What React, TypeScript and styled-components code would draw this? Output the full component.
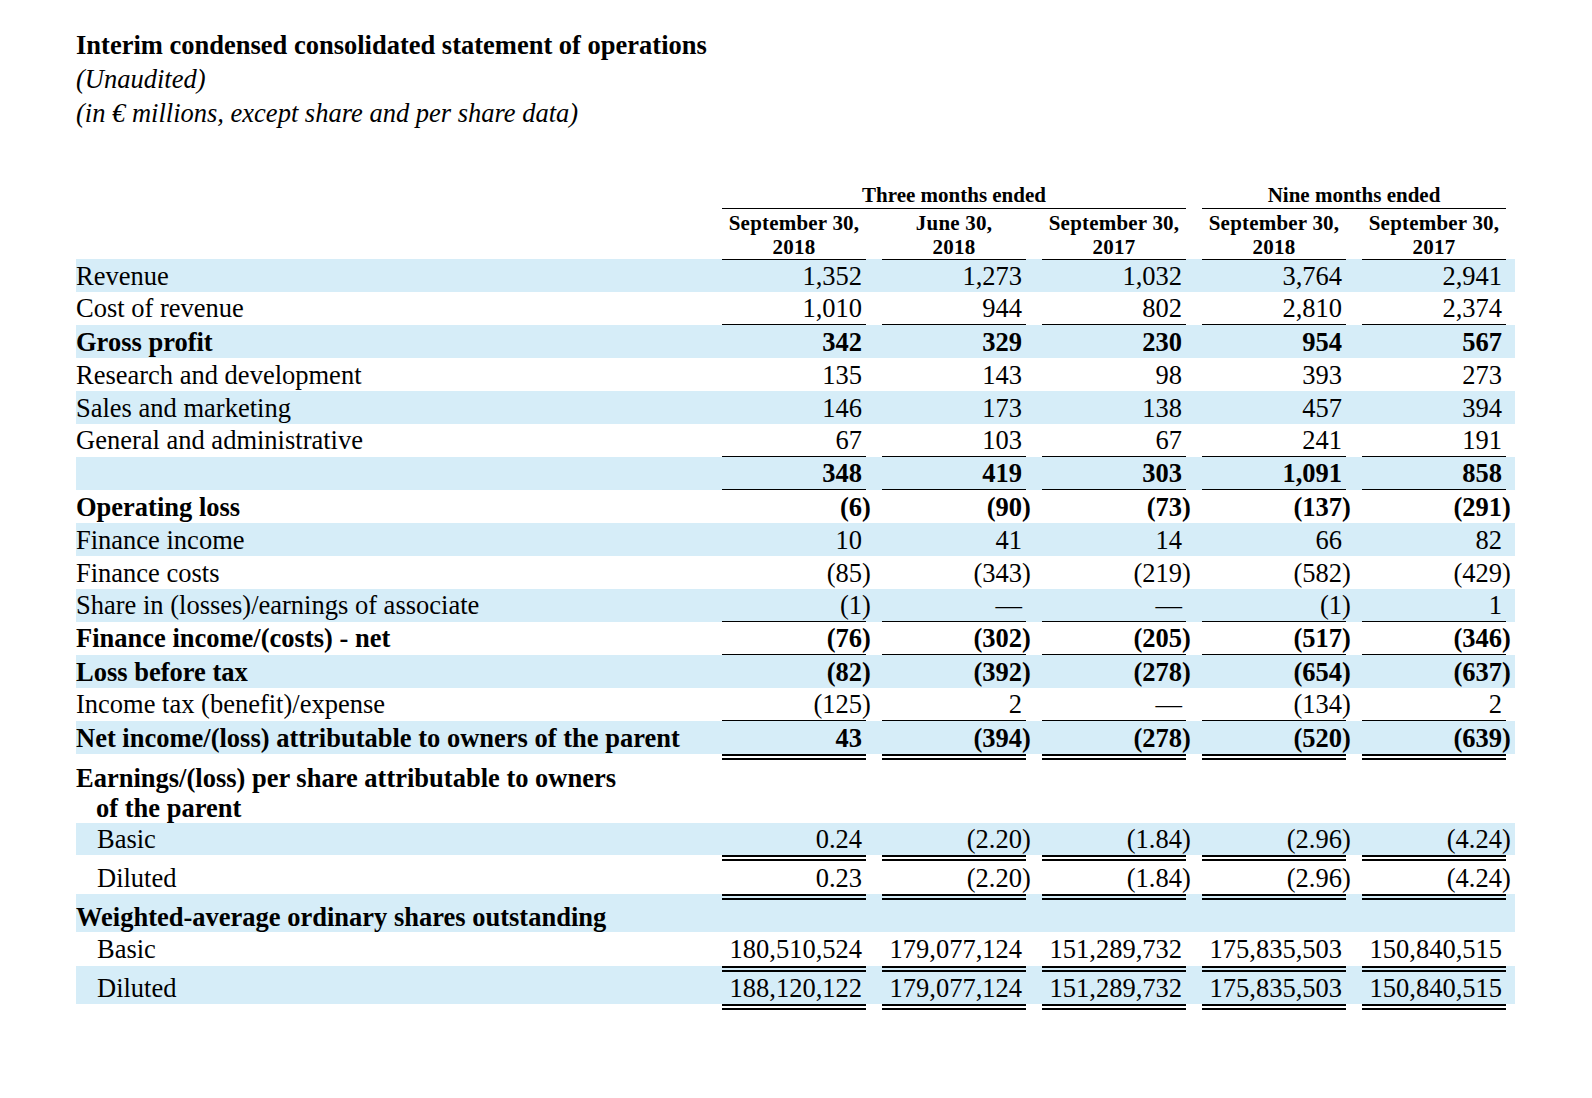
import React from 'react';
import styled, { createGlobalStyle, css } from 'styled-components';

type Rule = 'single' | 'double';

type Line = {
  label: string;
  values: string[];
  bold?: boolean;
  indent?: boolean;
  band?: boolean;
  heading?: boolean;
  height?: number;
  under?: Rule;
  over?: Rule;
};

const BAND = '#d6edf8';
const DOUBLE = 6;

const operations: Line[] = [
  { label: 'Revenue', band: true, values: ['1,352', '1,273', '1,032', '3,764', '2,941'] },
  { label: 'Cost of revenue', under: 'single', values: ['1,010', '944', '802', '2,810', '2,374'] },
  { label: 'Gross profit', band: true, bold: true, values: ['342', '329', '230', '954', '567'] },
  { label: 'Research and development', values: ['135', '143', '98', '393', '273'] },
  { label: 'Sales and marketing', band: true, values: ['146', '173', '138', '457', '394'] },
  { label: 'General and administrative', under: 'single', values: ['67', '103', '67', '241', '191'] },
  { label: '', band: true, bold: true, under: 'single', values: ['348', '419', '303', '1,091', '858'] },
  { label: 'Operating loss', bold: true, values: ['(6)', '(90)', '(73)', '(137)', '(291)'] },
  { label: 'Finance income', band: true, values: ['10', '41', '14', '66', '82'] },
  { label: 'Finance costs', values: ['(85)', '(343)', '(219)', '(582)', '(429)'] },
  { label: 'Share in (losses)/earnings of associate', band: true, under: 'single', values: ['(1)', '—', '—', '(1)', '1'] },
  { label: 'Finance income/(costs) - net', bold: true, under: 'single', values: ['(76)', '(302)', '(205)', '(517)', '(346)'] },
  { label: 'Loss before tax', band: true, bold: true, values: ['(82)', '(392)', '(278)', '(654)', '(637)'] },
  { label: 'Income tax (benefit)/expense', under: 'single', values: ['(125)', '2', '—', '(134)', '2'] },
  {
    label: 'Net income/(loss) attributable to owners of the parent',
    band: true,
    bold: true,
    height: 39,
    under: 'double',
    values: ['43', '(394)', '(278)', '(520)', '(639)'],
  },
];

const perShare: Line[] = [
  { label: 'Basic', indent: true, band: true, height: 38, under: 'double', values: ['0.24', '(2.20)', '(1.84)', '(2.96)', '(4.24)'] },
  { label: 'Diluted', indent: true, height: 33, values: ['0.23', '(2.20)', '(1.84)', '(2.96)', '(4.24)'] },
];

const sharesHeading: Line = {
  label: 'Weighted-average ordinary shares outstanding',
  bold: true,
  band: true,
  heading: true,
  height: 38,
  over: 'double',
  values: ['', '', '', '', ''],
};

const shares: Line[] = [
  { label: 'Basic', indent: true, height: 34, values: ['180,510,524', '179,077,124', '151,289,732', '175,835,503', '150,840,515'] },
  {
    label: 'Diluted',
    indent: true,
    band: true,
    height: 44,
    over: 'double',
    under: 'double',
    values: ['188,120,122', '179,077,124', '151,289,732', '175,835,503', '150,840,515'],
  },
];

const columns = [
  ['September 30,', '2018'],
  ['June 30,', '2018'],
  ['September 30,', '2017'],
  ['September 30,', '2018'],
  ['September 30,', '2017'],
];

const GlobalStyle = createGlobalStyle`
  html, body {
    margin: 0;
    background: #fff;
  }
  body {
    color: #000;
    font-family: "Liberation Serif", "Times New Roman", serif;
  }
`;

const Page = styled.main`
  padding: 28px 0 40px 76px;
`;

const Heading = styled.header`
  font-size: 26.5px;
  line-height: 34px;
`;

const Title = styled.h1`
  margin: 0;
  font-size: inherit;
  font-weight: 700;
`;

const Note = styled.div`
  font-style: italic;
`;

const Statement = styled.section`
  margin-top: 53px;
  width: 1439px;
`;

const grid = css`
  display: grid;
  grid-template-columns: 630px repeat(5, 144px);
  column-gap: 16px;
  padding-right: 9px;
`;

const GroupRow = styled.div`
  ${grid};
  height: 24px;
  font-size: 21px;
  font-weight: 700;
  line-height: 25px;
`;

const Group = styled.div<{ $from: number; $span: number }>`
  grid-column: ${(p) => p.$from} / span ${(p) => p.$span};
  text-align: center;
  border-bottom: 1px solid #000;
`;

const HeadRow = styled.div`
  ${grid};
  height: 52px;
  font-size: 21px;
  font-weight: 700;
  line-height: 24px;
`;

const ColHead = styled.div`
  padding-top: 4px;
  text-align: center;
  border-bottom: 1px solid #000;
  letter-spacing: 0.2px;
`;

const rule = (r?: Rule) => (r === 'double' ? `${DOUBLE}px double #000` : r === 'single' ? '1px solid #000' : 'none');

const Row = styled.div<{ $band?: boolean; $height: number; $bandHeight: number; $bold?: boolean }>`
  ${grid};
  height: ${(p) => p.$height}px;
  font-size: 26.5px;
  line-height: 30px;
  font-weight: ${(p) => (p.$bold ? 700 : 400)};
  background: ${(p) => (p.$band ? `linear-gradient(${BAND}, ${BAND}) top left / 100% ${p.$bandHeight}px no-repeat` : 'none')};
`;

const Label = styled.div<{ $indent?: boolean; $heading?: boolean; $top: number; $bottom: number }>`
  display: flex;
  align-items: ${(p) => (p.$heading ? 'flex-end' : 'center')};
  padding: ${(p) => p.$top}px 0 ${(p) => p.$bottom}px ${(p) => (p.$indent ? 21 : 0)}px;
  white-space: nowrap;
`;

const Amount = styled.div<{ $under?: Rule; $over?: Rule }>`
  display: flex;
  align-items: center;
  justify-content: flex-end;
  padding-right: 4px;
  white-space: nowrap;
  border-top: ${(p) => rule(p.$over)};
  border-bottom: ${(p) => rule(p.$under)};
`;

const Paren = styled.span`
  margin-right: -0.333em;
`;

const Section = styled.div`
  ${grid};
  height: 63px;
  font-size: 26.5px;
  font-weight: 700;
  line-height: 30px;
  align-content: end;
  box-sizing: border-box;
`;

const SectionTitle = styled.div`
  white-space: nowrap;
`;

const SectionMore = styled.div`
  padding-left: 20px;
`;

const Figure: React.FC<{ value: string }> = ({ value }) =>
  value.endsWith(')') ? (
    <span>
      {value.slice(0, -1)}
      <Paren>)</Paren>
    </span>
  ) : (
    <span>{value}</span>
  );

const LineRow: React.FC<{ line: Line }> = ({ line }) => {
  const height = line.height ?? 33;
  const bandHeight = line.under === 'double' ? height - DOUBLE : height;
  const top = line.over === 'double' ? DOUBLE : 0;
  const bottom = line.under === 'double' ? DOUBLE : line.under === 'single' ? 1 : 0;
  return (
    <Row $band={line.band} $bold={line.bold} $height={height} $bandHeight={bandHeight}>
      <Label $indent={line.indent} $heading={line.heading} $top={top} $bottom={bottom}>
        {line.label}
      </Label>
      {line.values.map((v, i) => (
        <Amount key={i} $under={line.under} $over={line.over}>
          {v && <Figure value={v} />}
        </Amount>
      ))}
    </Row>
  );
};

const App: React.FC = () => {
  return (
    <Page>
      <GlobalStyle />
      <Heading>
        <Title>Interim condensed consolidated statement of operations</Title>
        <Note>(Unaudited)</Note>
        <Note>(in € millions, except share and per share data)</Note>
      </Heading>

      <Statement>
        <GroupRow>
          <Group $from={2} $span={3}>Three months ended</Group>
          <Group $from={5} $span={2}>Nine months ended</Group>
        </GroupRow>
        <HeadRow>
          <div />
          {columns.map(([date, year], i) => (
            <ColHead key={i}>
              {date}
              <br />
              {year}
            </ColHead>
          ))}
        </HeadRow>

        {operations.map((line, i) => (
          <LineRow key={i} line={line} />
        ))}

        <Section>
          <div>
            <SectionTitle>Earnings/(loss) per share attributable to owners</SectionTitle>
            <SectionMore>of the parent</SectionMore>
          </div>
        </Section>
        {perShare.map((line, i) => (
          <LineRow key={i} line={line} />
        ))}

        <LineRow line={sharesHeading} />
        {shares.map((line, i) => (
          <LineRow key={i} line={line} />
        ))}
      </Statement>
    </Page>
  );
};

export default App;
